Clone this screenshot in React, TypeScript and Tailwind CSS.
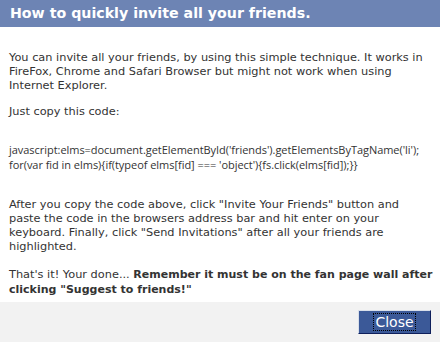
export default function App() {
  return (
    <div className="w-[440px] h-[342px] bg-white flex flex-col font-['DejaVu_Sans',sans-serif] text-[#333333]">
      <div className="h-[27px] bg-[#6d84b4] px-[10px] flex items-center">
        <h2 className="text-[14.2px] font-bold text-white leading-none">How to quickly invite all your friends.</h2>
      </div>
      <div className="flex-1 pl-[9px] pr-[4px] pt-[23px] text-[11.33px] leading-[14px] whitespace-nowrap">
        <p>
          You can invite all your friends, by using this simple technique. It works in
          <br />
          FireFox, Chrome and Safari Browser but might not work when using
          <br />
          Internet Explorer.
        </p>
        <p className="mt-[12px]">Just copy this code:</p>
        <p className="mt-[24px] font-['Open_Sans',sans-serif] text-[11px] leading-[15px] tracking-[-0.04px]">
          javascript:elms=document.getElementById('friends').getElementsByTagName('li');
          <br />
          for(var fid in elms){"{"}if(typeof elms[fid] === 'object'){"{"}fs.click(elms[fid]);{"}}"}
        </p>
        <p className="mt-[25px]">
          After you copy the code above, click "Invite Your Friends" button and
          <br />
          paste the code in the browsers address bar and hit enter on your
          <br />
          keyboard. Finally, click "Send Invitations" after all your friends are
          <br />
          highlighted.
        </p>
        <p className="mt-[14px]">
          That's it! Your done...{" "}
          <b className="text-[11px]">
            Remember it must be on the fan page wall after
            <br />
            clicking "Suggest to friends!"
          </b>
        </p>
      </div>
      <div className="h-[40px] bg-[#f2f2f2] flex items-center justify-end pr-[9px]">
        <button className="w-[73px] h-[24px] bg-[#3b5998] border border-t-[#d9dfea] border-l-[#d9dfea] border-b-[#0e1f5b] border-r-[#0e1f5b] text-white text-[14px] leading-none flex items-center justify-center">
          <span className="outline outline-1 outline-dotted outline-black px-[1px] py-[1px]">Close</span>
        </button>
      </div>
    </div>
  )
}
